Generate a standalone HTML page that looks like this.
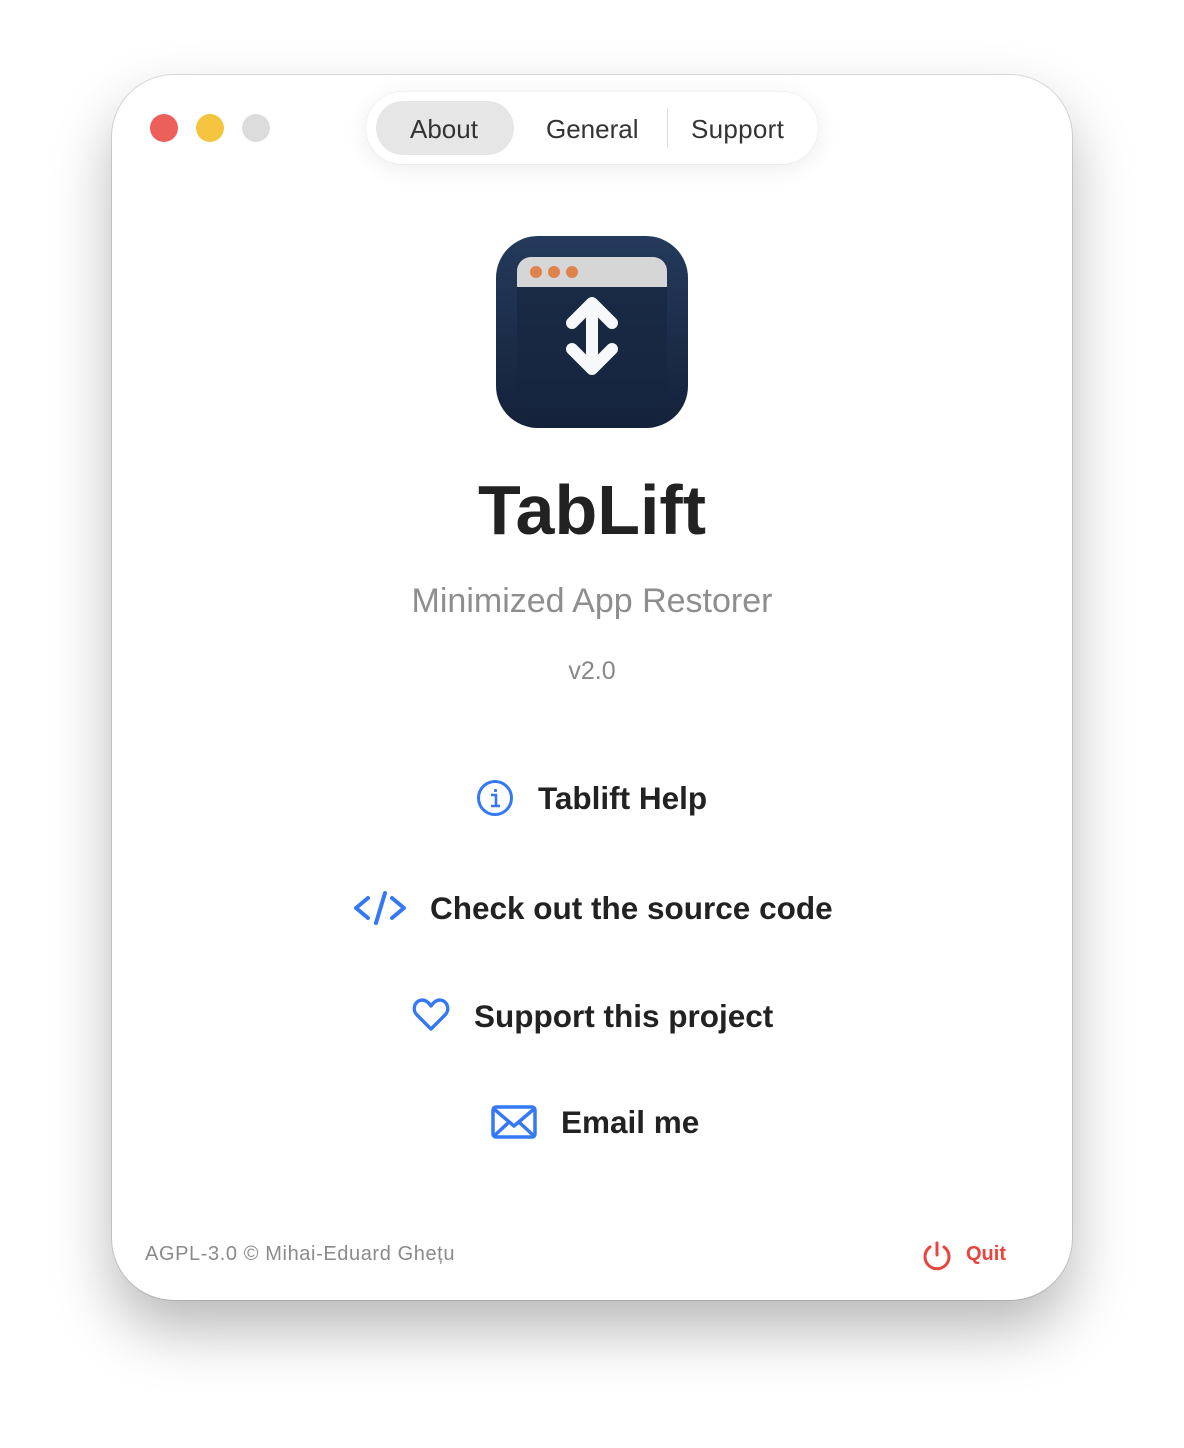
<!DOCTYPE html>
<html><head><style>
body{margin:0;width:1184px;height:1448px;background:#fff;font-family:"Liberation Sans",sans-serif;position:relative;overflow:hidden}
.win{position:absolute;left:112px;top:75px;width:960px;height:1225px;border-radius:62px;background:#fff;box-shadow:0 30px 60px rgba(0,0,0,.28),0 0 0 1px rgba(0,0,0,.12)}
.dot{position:absolute;top:114px;width:28px;height:28px;border-radius:50%}
.seg{position:absolute;left:366px;top:92px;width:452px;height:72px;border-radius:36px;background:#fff;box-shadow:0 4px 24px rgba(0,0,0,.08),0 0 0 1px rgba(0,0,0,.03)}
.sel{position:absolute;left:376px;top:101px;width:138px;height:54px;border-radius:27px;background:#e6e6e6}
.t{position:absolute;font-size:26px;color:#333;top:114px}
.c{position:absolute;left:0;width:1184px;text-align:center}
.lk{position:absolute;font-size:31.5px;font-weight:bold;color:#222}
</style></head><body>
<div class="win"></div>
<div class="dot" style="left:150px;background:#ec5f5a"></div>
<div class="dot" style="left:196px;background:#f4c43f"></div>
<div class="dot" style="left:242px;background:#dcdcdc"></div>
<div class="seg"></div><div class="sel"></div>
<div class="t" style="left:410px">About</div>
<div class="t" style="left:546px">General</div>
<div style="position:absolute;left:667px;top:108px;width:1px;height:40px;background:#ddd"></div>
<div class="t" style="left:691px;letter-spacing:.3px">Support</div>
<svg style="position:absolute;left:496px;top:236px" width="192" height="192" viewBox="0 0 192 192">
<defs><linearGradient id="g" x1="0" y1="0" x2="0" y2="1"><stop offset="0" stop-color="#243a5c"/><stop offset="1" stop-color="#14213a"/></linearGradient></defs>
<rect x="0" y="0" width="192" height="192" rx="42" fill="url(#g)"/>
<rect x="21" y="21" width="150" height="150" rx="14" fill="#172640" opacity=".7"/>
<path d="M21 51V35a14 14 0 0 1 14-14h122a14 14 0 0 1 14 14v16z" fill="#d6d6d6"/>
<circle cx="40" cy="36" r="6" fill="#e0824e"/><circle cx="58" cy="36" r="6" fill="#e0824e"/><circle cx="76" cy="36" r="6" fill="#e0824e"/>
<path d="M96 68v64M76 87l20-20 20 20M76 113l20 20 20-20" stroke="#f7f8fa" stroke-width="12" fill="none" stroke-linecap="round" stroke-linejoin="round"/>
</svg>
<div class="c" style="top:470px;font-size:70px;font-weight:bold;color:#222">TabLift</div>
<div class="c" style="top:582px;font-size:34px;color:#8e8e8e">Minimized App Restorer</div>
<div class="c" style="top:657px;font-size:25px;color:#888">v2.0</div>
<svg style="position:absolute;left:476px;top:779px" width="38" height="38" viewBox="0 0 38 38" fill="none" stroke="#3478f6" stroke-width="3"><circle cx="19" cy="19" r="16.5"/><path d="M15 16h5v11M15 27h9" stroke-width="2.6"/><circle cx="19.5" cy="11.5" r="1.6" fill="#3478f6" stroke="none"/></svg>
<div class="lk" style="left:538px;top:780px">Tablift Help</div>
<svg style="position:absolute;left:352px;top:890px" width="56" height="36" viewBox="0 0 56 36" fill="none" stroke="#3478f6" stroke-width="4" stroke-linecap="round" stroke-linejoin="round"><path d="M16 8L4 18l12 10M40 8l12 10-12 10M33 3l-9 30"/></svg>
<div class="lk" style="left:430px;top:890px">Check out the source code</div>
<svg style="position:absolute;left:412px;top:998px" width="38" height="34" viewBox="0 0 38 34" fill="none" stroke="#3478f6" stroke-width="3.4" stroke-linejoin="round"><path d="M19 31L5 17C0 12 2 3 10 2c4 0 7 3 9 6 2-3 5-6 9-6 8 1 10 10 5 15z"/></svg>
<div class="lk" style="left:474px;top:998px">Support this project</div>
<svg style="position:absolute;left:491px;top:1105px" width="46" height="34" viewBox="0 0 46 34" fill="none" stroke="#3478f6" stroke-width="3.5" stroke-linejoin="round"><rect x="2" y="2" width="42" height="30" rx="3"/><path d="M3 4l20 17 20-17M3 31l14-13M43 31l-14-13"/></svg>
<div class="lk" style="left:561px;top:1104px">Email me</div>
<div style="position:absolute;left:145px;top:1243px;font-size:20px;color:#8a8a8a;letter-spacing:.6px">AGPL-3.0 © Mihai-Eduard Ghețu</div>
<svg style="position:absolute;left:921px;top:1240px" width="32" height="32" viewBox="0 0 32 32" fill="none" stroke="#e8453c" stroke-width="3" stroke-linecap="round"><path d="M16 3v12M9 7a12 12 0 1 0 14 0"/></svg>
<div style="position:absolute;left:966px;top:1243px;font-size:20px;font-weight:bold;color:#e8453c">Quit</div>
</body></html>
